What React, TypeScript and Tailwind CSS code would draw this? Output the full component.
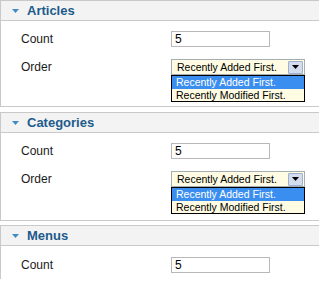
import React from 'react';

const Section = ({ title, children }: { title: string; children: React.ReactNode }) => (
  <div className="border-y border-l border-[#c9c9c9]">
    <div className="h-[20px] bg-[#f3f3f3] border-b border-[#c9c9c9] flex items-center pl-[11px]">
      <svg width="7" height="4" viewBox="0 0 7 4" className="mt-[1px]">
        <path d="M0 0H7L3.5 4Z" fill="#3f8dc6" />
      </svg>
      <span className="ml-[8px] text-[13px] font-bold text-[#1d5b8c] leading-none">{title}</span>
    </div>
    {children}
  </div>
);

const CountInput = () => (
  <div className="w-[99px] h-[16px] border border-[#b8b8b8] bg-white flex items-center pl-[3px] text-[12px] text-black leading-none">
    5
  </div>
);

const OrderSelect = () => (
  <div className="w-[134px]">
    <div className="h-[16px] border border-[#a5acb2] bg-[#fffce3] flex items-center justify-between pl-[5px] pr-[1px]">
      <span className="text-[10.5px] text-black leading-none">Recently Added First.</span>
      <div className="w-[15px] h-[13px] bg-[#d3ddef] border border-[#9fb0cf] rounded-[1px] flex items-center justify-center">
        <svg width="7" height="4" viewBox="0 0 7 4">
          <path d="M0 0H7L3.5 4Z" fill="#000" />
        </svg>
      </div>
    </div>
    <div className="border border-black bg-[#fffce3] text-[10.5px] leading-none">
      <div className="h-[13px] bg-[#3a8ef0] text-white flex items-center pl-[4px]">Recently Added First.</div>
      <div className="h-[12px] text-black flex items-center pl-[4px]">Recently Modified First.</div>
    </div>
  </div>
);

const Row = ({ label, children }: { label: string; children: React.ReactNode }) => (
  <div className="flex items-start">
    <div className="w-[150px] h-[16px] flex items-center text-[12px] text-[#1a1a1a] leading-none">{label}</div>
    {children}
  </div>
);

export default function App() {
  return (
    <div className="w-[319px] h-[289px] bg-white font-['Liberation_Sans',Arial,sans-serif] overflow-hidden">
      <Section title="Articles">
        <div className="pl-[20px] pt-[10px] pb-[4px] flex flex-col gap-[12px]">
          <Row label="Count"><CountInput /></Row>
          <Row label="Order"><OrderSelect /></Row>
        </div>
      </Section>
      <div className="mt-[5px]">
        <Section title="Categories">
          <div className="pl-[20px] pt-[10px] pb-[6px] flex flex-col gap-[12px]">
            <Row label="Count"><CountInput /></Row>
            <Row label="Order"><OrderSelect /></Row>
          </div>
        </Section>
      </div>
      <div className="mt-[4px]">
        <div className="border-t border-l border-[#c9c9c9]">
          <div className="h-[20px] bg-[#f3f3f3] border-b border-[#c9c9c9] flex items-center pl-[11px]">
            <svg width="7" height="4" viewBox="0 0 7 4" className="mt-[1px]">
              <path d="M0 0H7L3.5 4Z" fill="#3f8dc6" />
            </svg>
            <span className="ml-[8px] text-[13px] font-bold text-[#1d5b8c] leading-none">Menus</span>
          </div>
          <div className="pl-[20px] pt-[11px] pb-[6px]">
            <Row label="Count"><CountInput /></Row>
          </div>
        </div>
      </div>
    </div>
  );
}
